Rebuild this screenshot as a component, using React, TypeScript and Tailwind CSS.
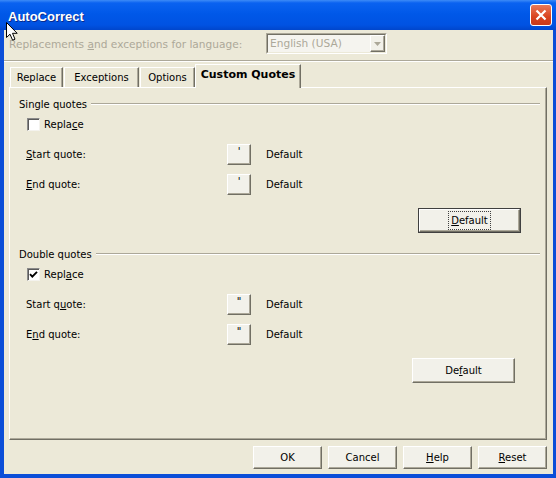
import { ReactNode } from 'react';
import clsx from 'clsx';

const face = "bg-[#f2f1ea] border border-t-white border-l-white border-r-[#716f64] border-b-[#716f64] shadow-[inset_-1px_-1px_0_#aca899]";

const XpButton = ({ children, className, focused }: { children: ReactNode; className?: string; focused?: boolean }) => {
  if (focused) {
    return (
      <div className={clsx('border border-[#404040]', className)}>
        <div className={clsx(face, 'h-full w-full flex items-center justify-center')}>
          <span className="outline-1 outline-dotted outline-[#404040] outline-offset-[1px] px-[1px]">{children}</span>
        </div>
      </div>
    );
  }
  return <div className={clsx(face, 'flex items-center justify-center', className)}>{children}</div>;
};

const Checkbox = ({ checked }: { checked?: boolean }) => (
  <div className="w-[13px] h-[13px] bg-white border border-t-[#8a8a8a] border-l-[#8a8a8a] border-r-[#f4f3ee] border-b-[#f4f3ee] shadow-[inset_1px_1px_0_#5a5a5a] flex items-center justify-center">
    {checked && (
      <svg width="9" height="9" viewBox="0 0 9 9">
        <path d="M1 4.2 L3.3 6.6 L8 1.8" stroke="#000" strokeWidth="1.9" fill="none" />
      </svg>
    )}
  </div>
);

const GroupTitle = ({ title }: { title: string }) => (
  <div className="h-[20px] flex items-center pl-[9px] pr-[6px]">
    <span>{title}</span>
    <div className="flex-1 ml-[4px] h-[2px] border-t border-[#aca899] bg-white" />
  </div>
);

const QuoteRow = ({ label, glyph }: { label: ReactNode; glyph: string }) => (
  <div className="h-[30px] flex items-center pl-[16px]">
    <div className="w-[201px]">{label}</div>
    <XpButton className="w-[24px] h-[21px] text-[10px] leading-none pb-[4px]">{glyph}</XpButton>
    <span className="ml-[15px]">Default</span>
  </div>
);

const QuoteGroup = ({
  title,
  checked,
  replace,
  start,
  end,
  glyph,
  defaultLabel,
  focused,
  pr,
}: {
  title: string;
  checked?: boolean;
  replace: ReactNode;
  start: ReactNode;
  end: ReactNode;
  glyph: string;
  defaultLabel: ReactNode;
  focused?: boolean;
  pr: string;
}) => (
  <div className="flex flex-col">
    <GroupTitle title={title} />
    <div className="h-[20px] flex items-center pl-[17px] gap-[4px]">
      <Checkbox checked={checked} />
      <span>{replace}</span>
    </div>
    <div className="mt-[5px]">
      <QuoteRow label={start} glyph={glyph} />
      <QuoteRow label={end} glyph={glyph} />
    </div>
    <div className={clsx('mt-[9px] flex justify-end', pr)}>
      <XpButton className="w-[103px] h-[25px]" focused={focused}>
        {defaultLabel}
      </XpButton>
    </div>
  </div>
);

const tabs = [
  { name: 'Replace', w: 'w-[53px]' },
  { name: 'Exceptions', w: 'w-[75px]' },
  { name: 'Options', w: 'w-[55px]' },
];

export default function App() {
  return (
    <div className="relative w-[556px] h-[478px] bg-[#0b4ed8] flex flex-col overflow-hidden font-['DejaVu_Sans',sans-serif] text-[10px] text-black">
      {/* title bar */}
      <div className="h-[30px] flex items-center pl-[8px] bg-[linear-gradient(to_bottom,#3d8bf7_0px,#0a62f0_3px,#0058e8_14px,#0052e2_25px,#0046cc_30px)]">
        <span className="pt-[3px] font-['Liberation_Sans',sans-serif] font-bold text-[13px] text-white [text-shadow:1px_1px_0_#0a2a8a]">AutoCorrect</span>
        <div className="ml-auto mr-[4px] w-[22px] h-[22px] rounded-[3px] border border-white bg-[linear-gradient(to_bottom,#ea7a5a,#d9431e_60%,#c8391a)] flex items-center justify-center">
          <svg width="12" height="12" viewBox="0 0 12 12">
            <path d="M1.5 1.5 L10.5 10.5 M10.5 1.5 L1.5 10.5" stroke="#fff" strokeWidth="2.2" />
          </svg>
        </div>
      </div>

      {/* body */}
      <div className="flex-1 ml-[4px] mr-[3px] mb-[4px] bg-[#ece9d8] flex flex-col">
        <div className="h-[30px] flex pl-[5px]">
          <div className="w-[257px] self-center text-[10.6px] text-[#aca899]">
            Replacements <u>a</u>nd exceptions for language:
          </div>
          <div className="mt-[3px] w-[121px] h-[21px] border border-t-[#aca899] border-l-[#aca899] border-r-white border-b-white">
            <div className="h-full flex bg-[#f5f4ef] border border-t-[#716f64] border-l-[#716f64] border-r-[#ece9d8] border-b-[#ece9d8]">
              <span className="flex-1 pl-[2px] self-center text-[10.6px] text-[#aca899]">English (USA)</span>
              <div className={clsx(face, 'w-[15px] h-full flex items-center justify-center')}>
                <svg width="7" height="4" viewBox="0 0 7 4">
                  <path d="M0 0 L7 0 L3.5 4 Z" fill="#aca899" />
                </svg>
              </div>
            </div>
          </div>
        </div>
        <div className="h-[2px] border-t border-[#aca899] bg-white" />

        {/* tabs */}
        <div className="mt-[2px] ml-[6px] flex items-end h-[23px]">
          {tabs.map((t) => (
            <div
              key={t.name}
              className={clsx(
                t.w,
                'h-[20px] mr-[1px] flex items-center justify-center border-t border-l border-white border-r border-r-[#716f64] shadow-[inset_-1px_0_0_#aca899]',
              )}
            >
              {t.name}
            </div>
          ))}
          <div className="relative z-10 -ml-[1px] w-[106px] h-[24px] -mb-[1px] bg-[#ece9d8] flex items-center justify-center pb-[2px] border-t border-l border-white border-r border-r-[#716f64] shadow-[inset_-1px_0_0_#aca899] font-bold text-[11px]">
            Custom Quotes
          </div>
        </div>

        {/* panel */}
        <div className="ml-[5px] mr-[6px] h-[353px] border border-t-white border-l-white border-r-[#716f64] border-b-[#716f64] shadow-[inset_-1px_-1px_0_#aca899] pt-[6px] flex flex-col">
          <QuoteGroup
            title="Single quotes"
            replace={<>Repla<u>c</u>e</>}
            start={<><u>S</u>tart quote:</>}
            end={<><u>E</u>nd quote:</>}
            glyph="'"
            defaultLabel={<><u>D</u>efault</>}
            focused
            pr="pr-[25px]"
          />
          <div className="mt-[11px]">
            <QuoteGroup
              title="Double quotes"
              checked
              replace={<>Repl<u>a</u>ce</>}
              start={<>Start q<u>u</u>ote:</>}
              end={<>E<u>n</u>d quote:</>}
              glyph={'"'}
              defaultLabel={<>De<u>f</u>ault</>}
              pr="pr-[31px]"
            />
          </div>
        </div>

        {/* bottom buttons */}
        <div className="mt-[6px] flex justify-end gap-[6px] pr-[6px]">
          <XpButton className="w-[69px] h-[23px]">OK</XpButton>
          <XpButton className="w-[69px] h-[23px]">Cancel</XpButton>
          <XpButton className="w-[69px] h-[23px]">
            <span><u>H</u>elp</span>
          </XpButton>
          <XpButton className="w-[69px] h-[23px]">
            <span><u>R</u>eset</span>
          </XpButton>
        </div>
      </div>

      {/* mouse pointer */}
      <svg className="absolute left-[6px] top-[22px]" width="13" height="20" viewBox="0 0 13 20">
        <path d="M0.5 0.5 L0.5 15.5 L4 12.2 L6.6 18.2 L9 17.2 L6.5 11.3 L11.2 11.3 Z" fill="#fff" stroke="#000" strokeWidth="1" />
      </svg>
    </div>
  );
}
